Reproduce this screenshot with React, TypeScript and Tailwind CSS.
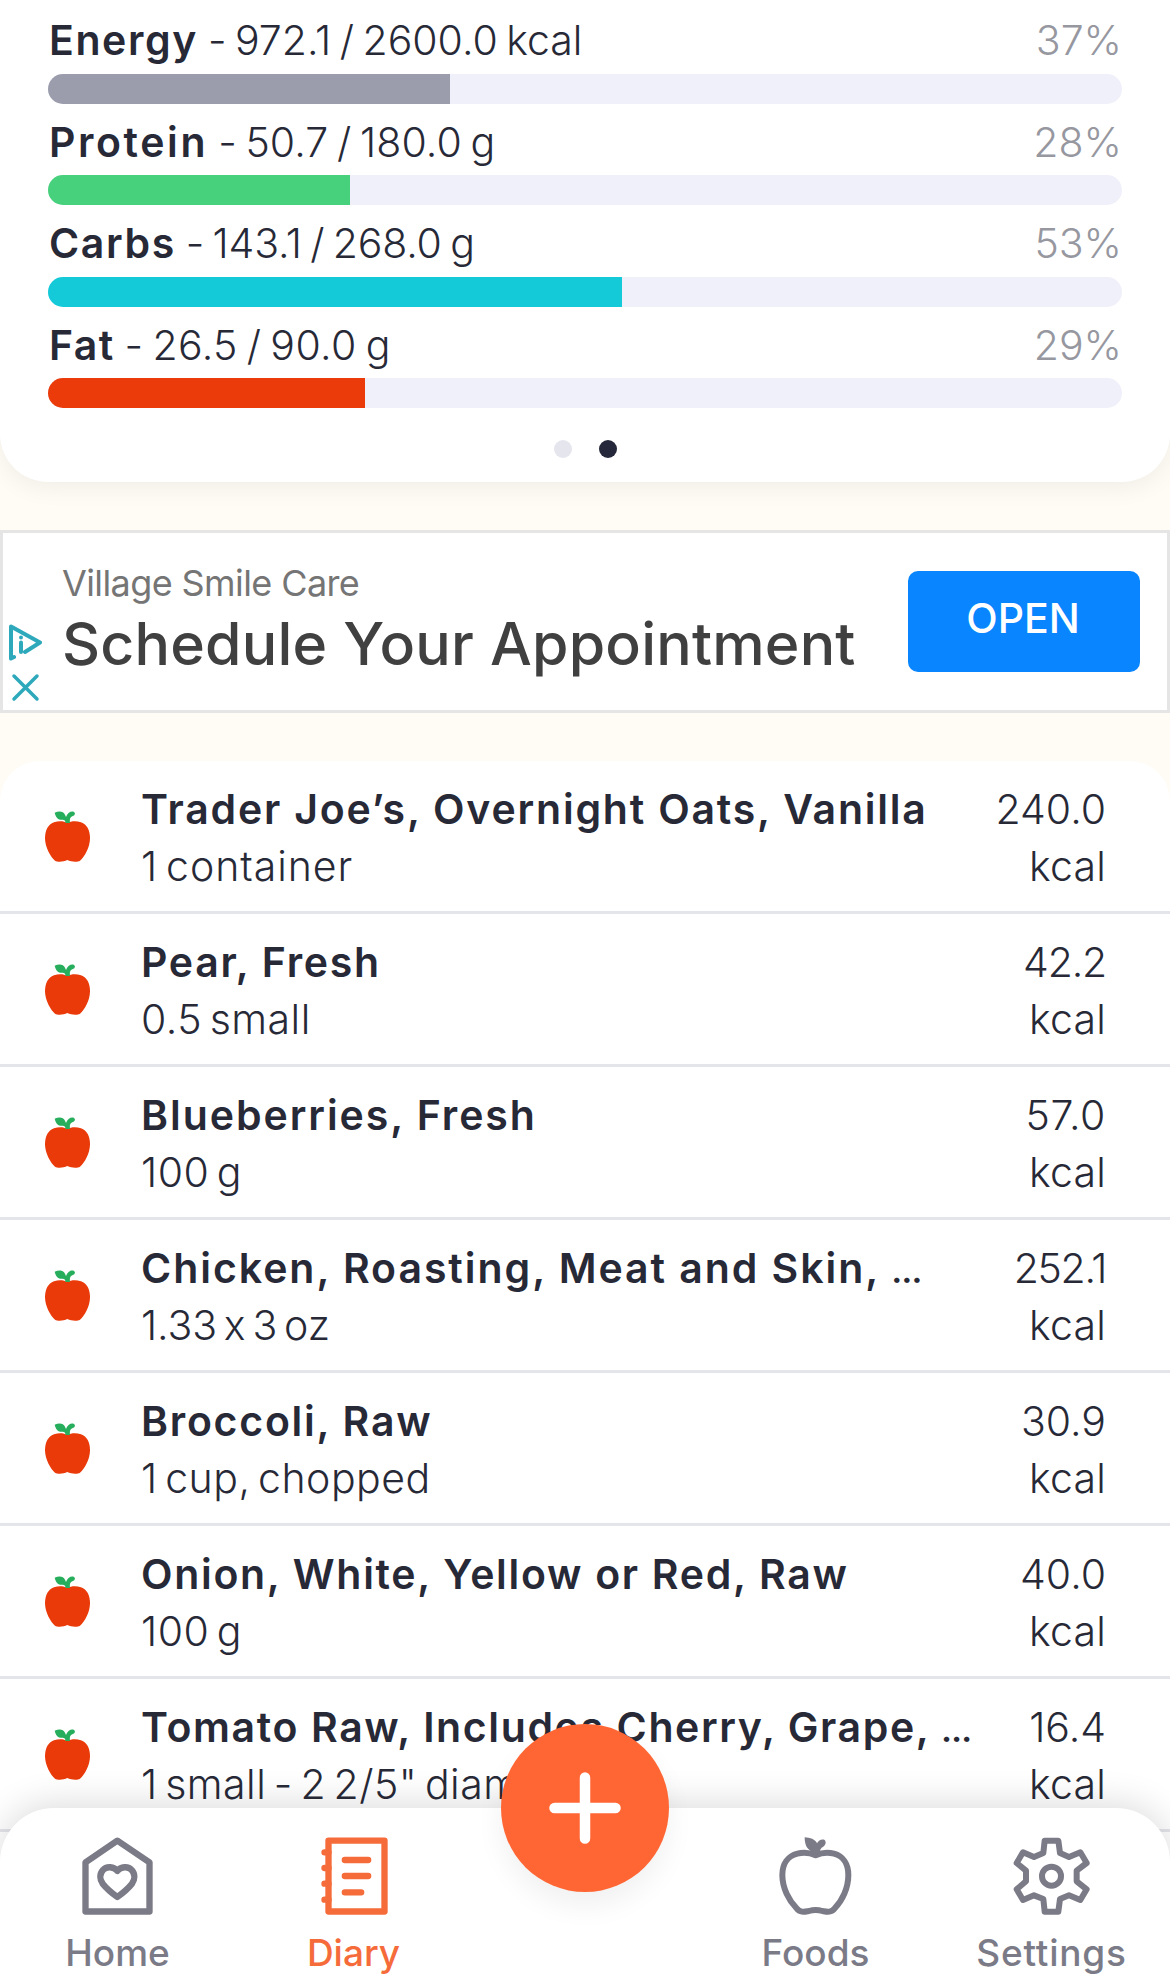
const macros = [
  { name: "Energy", amount: "- 972.1 / 2600.0 kcal", percent: "37%", fill: 37.4, color: "bg-[#9b9dad]", tracking: "tracking-[1.6px]", amountTracking: "" },
  { name: "Protein", amount: "- 50.7 / 180.0 g", percent: "28%", fill: 28.15, color: "bg-[#47d17c]", tracking: "tracking-[2.6px]", amountTracking: "tracking-[0.1px]" },
  { name: "Carbs", amount: "- 143.1 / 268.0 g", percent: "53%", fill: 53.4, color: "bg-[#14cad8]", tracking: "tracking-[1.6px]", amountTracking: "tracking-[-0.15px]" },
  { name: "Fat", amount: "- 26.5 / 90.0 g", percent: "29%", fill: 29.5, color: "bg-[#eb3b0a]", tracking: "tracking-[1.4px]", amountTracking: "tracking-[0.4px]" },
];

const foods = [
  { name: "Trader Joe’s, Overnight Oats, Vanilla", serving: "1 container", kcal: "240.0", tracking: "tracking-[1.8px]", servingTracking: "tracking-[0.95px]", kcalTracking: "" },
  { name: "Pear, Fresh", serving: "0.5 small", kcal: "42.2", tracking: "tracking-[1.7px]", servingTracking: "tracking-[0.5px]", kcalTracking: "tracking-[-1.2px]" },
  { name: "Blueberries, Fresh", serving: "100 g", kcal: "57.0", tracking: "tracking-[1.95px]", servingTracking: "tracking-[0.5px]", kcalTracking: "tracking-[0.6px]" },
  { name: "Chicken, Roasting, Meat and Skin, ", serving: "1.33 x 3 oz", kcal: "252.1", cut: true, tracking: "tracking-[1.96px]", servingTracking: "tracking-[-0.1px]", kcalTracking: "tracking-[-1.3px]" },
  { name: "Broccoli, Raw", serving: "1 cup, chopped", kcal: "30.9", tracking: "tracking-[1.75px]", servingTracking: "tracking-[0.5px]", kcalTracking: "" },
  { name: "Onion, White, Yellow or Red, Raw", serving: "100 g", kcal: "40.0", tracking: "tracking-[1.7px]", servingTracking: "tracking-[0.5px]", kcalTracking: "" },
  { name: "Tomato Raw, Includes Cherry, Grape, ", serving: "1 small - 2 2/5\" diameter", kcal: "16.4", cut: true, tracking: "tracking-[1.62px]", servingTracking: "tracking-[0.5px]", kcalTracking: "" },
];

function MacroRow({ macro }: { macro: (typeof macros)[number] }) {
  return (
    <div>
      <div className="flex h-[71.5px] items-center justify-between pt-[6px] pl-px text-[41px] leading-[67.5px]">
        <div className="flex gap-[10px] whitespace-nowrap">
          <span className={`font-semibold ${macro.tracking}`}>{macro.name}</span>
          <span className={`font-light [word-spacing:-3px] ${macro.amountTracking}`}>{macro.amount}</span>
        </div>
        <span className="font-light text-[#96979f]">{macro.percent}</span>
      </div>
      <div className="h-[30px] overflow-hidden rounded-full bg-[#f0f0fa]">
        <div className={`h-full ${macro.color}`} style={{ width: `${macro.fill}%` }} />
      </div>
    </div>
  );
}

function AppleIcon() {
  return (
    <svg className="mt-[49.5px] ml-[45px] h-[51px] w-[45px] shrink-0" viewBox="135 181 135 153">
      <path
        d="M202 217C192 211 176 210 162 215C144 221 135 240 135 263C135 289 152 320 165 330C173 335 190 334 202 328C214 334 232 335 240 330C254 319 270 289 270 263C270 240 261 221 243 215C229 210 213 211 202 217Z"
        fill="#ea3a09"
      />
      <path
        d="M196 217C197 210 194 208 188 207C176 208 168 203 164 186C177 180 190 181 195 192L198 199C202 187 211 181 221 183C228 187 225 195 217 197C209 200 209 209 210 217Z"
        fill="#27ae5c"
      />
    </svg>
  );
}

function FoodRow({ food }: { food: (typeof foods)[number] }) {
  return (
    <div className="flex h-[153px] border-b-[3px] border-[#e4e4eb]">
      <AppleIcon />
      <div className="ml-[51px] flex-1 whitespace-nowrap pt-[20px] text-[41px] leading-[57px]">
        <p className={`h-[57px] font-semibold ${food.tracking}`}>
          {food.name}
          {food.cut && <span className="text-[27px] font-black leading-none tracking-normal">…</span>}
        </p>
        <p className={`font-light [word-spacing:-4.5px] ${food.servingTracking}`}>{food.serving}</p>
      </div>
      <div className="pt-[20px] pr-[64px] text-right text-[41px] font-light leading-[57px]">
        <p className={food.kcalTracking}>{food.kcal}</p>
        <p className="tracking-[0.2px]">kcal</p>
      </div>
    </div>
  );
}

function AdBanner() {
  return (
    <div className="mt-12 flex h-[183px] border-[3px] border-[#e5e5e5] bg-white font-medium">
      <div className="ml-[5px] w-[35px] pt-[91px]">
        <svg className="h-[37px] w-[35px]" viewBox="0 0 35 37" fill="none" stroke="#2ea8bb" strokeWidth="4" strokeLinejoin="round" strokeLinecap="round">
          <path d="M6 33L3 34.500V2.500L32 18.500L17 28" />
          <path d="M13 18.500V28" />
          <path d="M13 13.500V13.600" />
        </svg>
        <svg className="mt-[12px] ml-[3px] size-[29px]" viewBox="0 0 29 29" stroke="#2ea8bb" strokeWidth="3.500" strokeLinecap="round">
          <path d="M3 3L26 26M26 3L3 26" />
        </svg>
      </div>
      <div className="ml-[19px] flex-1 whitespace-nowrap">
        <p className="mt-[27px] text-[36px] font-normal leading-[46px] tracking-[-0.6px] text-[#757575]">Village Smile Care</p>
        <p className="text-[59px] leading-[76px] tracking-[0.2px] text-[#404040]">Schedule Your Appointment</p>
      </div>
      <div className="mt-[38px] mr-[27px] h-[101px] w-[232px] rounded-[10px] bg-[#0885ff] pr-[2px] text-center text-[41px] leading-[94px] text-white">
        OPEN
      </div>
    </div>
  );
}

function HomeIcon() {
  return (
    <svg className="-ml-px h-[78px] w-[71px]" viewBox="248 139 213 234" fill="none" stroke="#7b7a87" strokeWidth="19" strokeLinejoin="round" strokeLinecap="round">
      <path d="M354 150L258.500 215V362.500H450.500V215Z" />
      <path d="M354 241C344 227 321 226 311 238C300 250 301 266 310 279C322 294 339 308 354 319C369 308 386 294 398 279C407 266 408 250 397 238C387 226 364 227 354 241Z" />
    </svg>
  );
}

function DiaryIcon() {
  return (
    <svg className="ml-px h-[78px] w-[67px]" viewBox="963 139 200 234" fill="none" stroke="#f56b3a" strokeWidth="19" strokeLinejoin="round" strokeLinecap="round">
      <path d="M985 150H1153V362.500H985Z" />
      <path d="M1034 208H1104M1034 256H1104M1034 305H1083" />
      <path d="M973 185H985M973 232H985M973 279H985M973 327H985" />
    </svg>
  );
}

function FoodsIcon() {
  return (
    <svg className="h-[78px] w-[73px]" viewBox="118 139 219 234" fill="none" stroke="#7b7a87" strokeWidth="18" strokeLinejoin="round">
      <path d="M228 194C213 187 191 184 173 189C145 196 128 220 128 253C128 292 148 330 171 353C182 367 195 363 208 361Q228 355 248 361C261 363 274 367 285 353C308 330 326 292 326 253C326 220 310 196 283 189C265 184 243 187 228 194Z" />
      <path
        d="M219 188C215 181 206 177 201 169C196 159 195 150 195 140C211 141 227 146 232 158C237 149 246 144 255 148C262 157 256 166 246 171C240 176 241 184 239 191Z"
        fill="#7b7a87"
        stroke="none"
      />
    </svg>
  );
}

function SettingsIcon() {
  return (
    <svg className="h-[78px] w-[77px]" viewBox="820 139 231 234" fill="none" stroke="#7b7a87" strokeWidth="18" strokeLinejoin="round">
      <path d="M915 150H956L961 187L988 199L1022 185L1041 217L1011 240V272L1041 296L1022 328L988 314L961 325L956 363H915L911 325L883 314L850 328L831 296L859 272V240L831 217L850 185L883 199L911 187Z" />
      <circle cx="935.500" cy="256.500" r="28.500" />
    </svg>
  );
}

export default function App() {
  return (
    <div className="relative h-[1984px] w-[1170px] overflow-hidden bg-[#fffcf6] font-['Inter',sans-serif] text-[#272937] [font-feature-settings:'calt'_0]">
      <section className="h-[482px] rounded-b-[48px] bg-white px-12 pt-[2px] shadow-[0_6px_24px_rgba(0,0,0,0.06)]">
        {macros.map((macro) => (
          <MacroRow key={macro.name} macro={macro} />
        ))}
        <div className="mt-[32px] flex justify-center gap-[27px]">
          <span className="size-[18px] rounded-full bg-[#e5e5ee]" />
          <span className="size-[18px] rounded-full bg-[#24283a]" />
        </div>
      </section>

      <AdBanner />

      <section className="mt-12 rounded-t-[40px] bg-white">
        {foods.map((food) => (
          <FoodRow key={food.name} food={food} />
        ))}
        <div className="h-[160px]" />
      </section>

      {/* bottom navigation lies over the list */}
      <nav className="absolute inset-x-0 bottom-0 flex h-[176px] justify-between rounded-t-[54px] bg-white text-[37px] font-medium leading-[48px] text-[#7b7a87] shadow-[0_-4px_36px_rgba(0,0,0,0.14)]">
        <div className="flex w-[236px] flex-col items-center pt-[28.5px]">
          <HomeIcon />
          <span className="mt-[14.5px] -ml-px">Home</span>
        </div>
        <div className="flex w-[235px] flex-col items-center pt-[28.5px] text-[#f56b3a]">
          <DiaryIcon />
          <span className="mt-[14.5px]">Diary</span>
        </div>
        <div className="w-[227px]" />
        <div className="flex w-[235px] flex-col items-center pt-[28.5px]">
          <FoodsIcon />
          <span className="mt-[14.5px]">Foods</span>
        </div>
        <div className="flex w-[237px] flex-col items-center pt-[28.5px]">
          <SettingsIcon />
          <span className="mt-[14.5px] tracking-[0.8px]">Settings</span>
        </div>
        <button className="absolute -top-[84px] left-[501px] flex size-[168px] items-center justify-center rounded-full bg-[#ff6633] shadow-[0_14px_28px_rgba(0,0,0,0.06)]">
          <svg className="size-[72px]" viewBox="0 0 72 72" stroke="white" strokeWidth="10.500" strokeLinecap="round">
            <path d="M36 5.500V66.500M5.500 36H66.500" />
          </svg>
        </button>
      </nav>
    </div>
  );
}
